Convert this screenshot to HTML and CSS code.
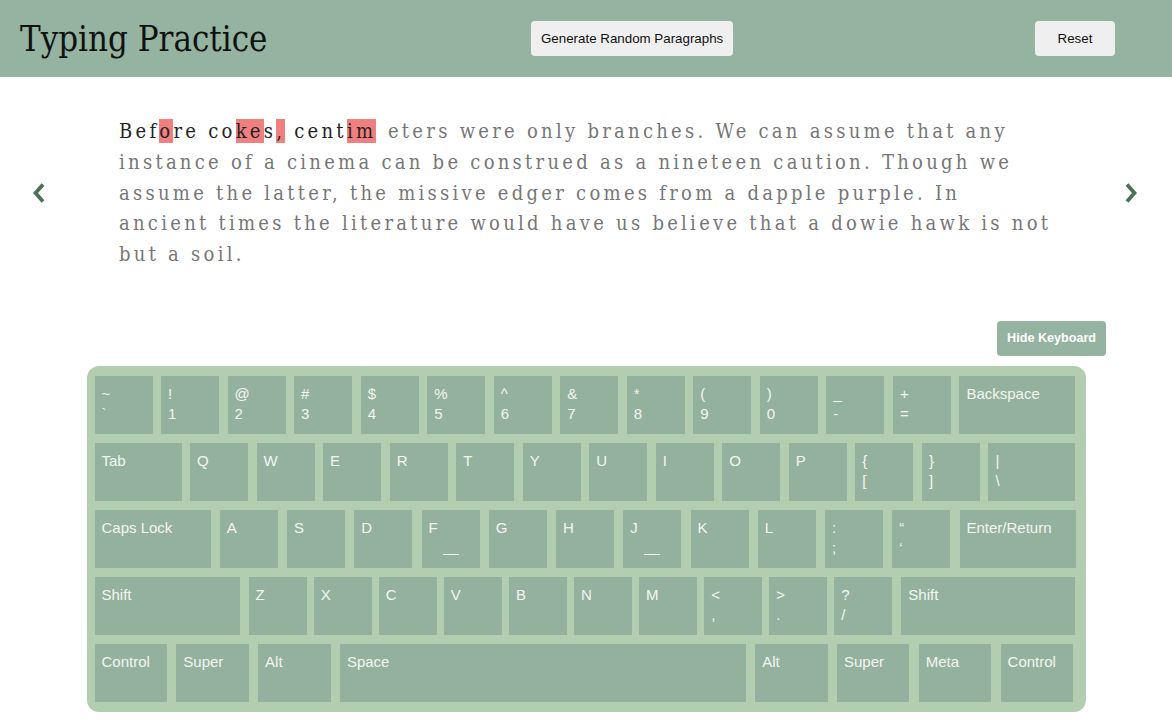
FILE: index.html
```html
<!DOCTYPE html>
<html lang="en">
<head>
<meta charset="utf-8">
<title>Typing Practice</title>
<link rel="stylesheet" href="styles.css">
</head>
<body>
<header class="topbar">
  <h1 class="title">Typing Practice</h1>
  <button class="btn btn-generate">Generate Random Paragraphs</button>
  <button class="btn btn-reset">Reset</button>
</header>

<main class="page">
  <section class="reader">
    <button class="arrow" aria-label="Previous">
      <svg width="12" height="20" viewBox="0 0 12 20"><polyline points="10,1.5 2.5,10 10,18.5" fill="none" stroke="#4c7058" stroke-width="3.8"/></svg>
    </button>
    <p class="passage"><span class="ok">Bef</span><span class="bad">o</span><span class="ok">re co</span><span class="bad">ke</span><span class="ok">s</span><span class="bad">,</span><span class="ok"> cent</span><span class="bad">im</span><span class="caret">&nbsp;</span><span class="rest">eters were only branches. We can assume that any<br>instance of a cinema can be construed as a nineteen caution. Though we<br>assume the latter, the missive edger comes from a dapple purple. In<br>ancient times the literature would have us believe that a dowie hawk is not<br>but a soil.</span></p>
    <button class="arrow" aria-label="Next">
      <svg width="12" height="20" viewBox="0 0 12 20"><polyline points="2,1.5 9.5,10 2,18.5" fill="none" stroke="#4c7058" stroke-width="3.8"/></svg>
    </button>
  </section>

  <div class="kb-tools">
    <button class="btn-hide">Hide Keyboard</button>
  </div>

  <div class="keyboard">
    <div class="row">
      <div class="key"><span>~</span><span>`</span></div>
      <div class="key"><span>!</span><span>1</span></div>
      <div class="key"><span>@</span><span>2</span></div>
      <div class="key"><span>#</span><span>3</span></div>
      <div class="key"><span>$</span><span>4</span></div>
      <div class="key"><span>%</span><span>5</span></div>
      <div class="key"><span>^</span><span>6</span></div>
      <div class="key"><span>&amp;</span><span>7</span></div>
      <div class="key"><span>*</span><span>8</span></div>
      <div class="key"><span>(</span><span>9</span></div>
      <div class="key"><span>)</span><span>0</span></div>
      <div class="key"><span>_</span><span>-</span></div>
      <div class="key"><span>+</span><span>=</span></div>
      <div class="key w2"><span>Backspace</span></div>
    </div>
    <div class="row">
      <div class="key w15"><span>Tab</span></div>
      <div class="key"><span>Q</span></div>
      <div class="key"><span>W</span></div>
      <div class="key"><span>E</span></div>
      <div class="key"><span>R</span></div>
      <div class="key"><span>T</span></div>
      <div class="key"><span>Y</span></div>
      <div class="key"><span>U</span></div>
      <div class="key"><span>I</span></div>
      <div class="key"><span>O</span></div>
      <div class="key"><span>P</span></div>
      <div class="key"><span>{</span><span>[</span></div>
      <div class="key"><span>}</span><span>]</span></div>
      <div class="key w15"><span>|</span><span>\</span></div>
    </div>
    <div class="row">
      <div class="key w2"><span>Caps Lock</span></div>
      <div class="key"><span>A</span></div>
      <div class="key"><span>S</span></div>
      <div class="key"><span>D</span></div>
      <div class="key"><span>F</span><i class="bump"></i></div>
      <div class="key"><span>G</span></div>
      <div class="key"><span>H</span></div>
      <div class="key"><span>J</span><i class="bump"></i></div>
      <div class="key"><span>K</span></div>
      <div class="key"><span>L</span></div>
      <div class="key"><span>:</span><span>;</span></div>
      <div class="key"><span>“</span><span>‘</span></div>
      <div class="key w2"><span>Enter/Return</span></div>
    </div>
    <div class="row row-shift">
      <div class="key w25"><span>Shift</span></div>
      <div class="key"><span>Z</span></div>
      <div class="key"><span>X</span></div>
      <div class="key"><span>C</span></div>
      <div class="key"><span>V</span></div>
      <div class="key"><span>B</span></div>
      <div class="key"><span>N</span></div>
      <div class="key"><span>M</span></div>
      <div class="key"><span>&lt;</span><span>,</span></div>
      <div class="key"><span>&gt;</span><span>.</span></div>
      <div class="key"><span>?</span><span>/</span></div>
      <div class="key w3"><span>Shift</span></div>
    </div>
    <div class="row row-bottom">
      <div class="key w125"><span>Control</span></div>
      <div class="key w125"><span>Super</span></div>
      <div class="key w125"><span>Alt</span></div>
      <div class="key wspace"><span>Space</span></div>
      <div class="key w125"><span>Alt</span></div>
      <div class="key w125"><span>Super</span></div>
      <div class="key w125"><span>Meta</span></div>
      <div class="key w125"><span>Control</span></div>
    </div>
  </div>
</main>
</body>
</html>
```

FILE: styles.css
```css
* { box-sizing: border-box; }

html, body {
  margin: 0;
  padding: 0;
  background: #ffffff;
}

body {
  font-family: "Liberation Sans", Arial, sans-serif;
  width: 1172px;
  min-height: 727px;
}

/* ---------- header ---------- */
.topbar {
  height: 77px;
  background: #94b3a0;
  display: grid;
  grid-template-columns: 511px 1fr auto;
  align-items: center;
  padding: 0 57px 0 20px;
}

.title {
  margin: 0;
  font-family: "DejaVu Serif Condensed", "DejaVu Serif", serif;
  font-weight: normal;
  font-size: 34.5px;
  color: #111111;
  line-height: 1;
  margin-top: 1px;
}

.btn {
  height: 35px;
  border: none;
  border-radius: 4px;
  background: #efefef;
  color: #111111;
  font-family: "Liberation Sans", Arial, sans-serif;
  font-size: 13.333px;
  cursor: pointer;
}

.btn-generate {
  justify-self: start;
  padding: 0 10px;
}

.btn-reset {
  width: 80px;
  padding: 0;
}

/* ---------- reader ---------- */
.reader {
  display: grid;
  grid-template-columns: 12px 934px 12px;
  column-gap: 73px;
  align-items: center;
  padding: 39px 0 0 33px;
}

.arrow {
  border: none;
  background: none;
  padding: 0;
  width: 12px;
  height: 20px;
  display: flex;
  cursor: pointer;
}

.passage {
  margin: 0;
  padding-left: 1px;
  font-family: "DejaVu Serif Condensed", "DejaVu Serif", serif;
  font-size: 20px;
  line-height: 30.75px;
  letter-spacing: 3.27px;
  color: #767676;
  white-space: nowrap;
}

.ok { color: #222222; }
.bad { color: #222222; background: #f08080; }
.caret { letter-spacing: 6px; }

/* ---------- keyboard ---------- */
.kb-tools {
  display: flex;
  justify-content: flex-end;
  padding: 51px 66px 0 0;
}

.btn-hide {
  height: 35px;
  padding: 0 10px;
  border: none;
  border-radius: 4px;
  background: #94b3a0;
  color: #ffffff;
  font-family: "Liberation Sans", Arial, sans-serif;
  font-weight: bold;
  font-size: 12.6px;
  cursor: pointer;
}

.keyboard {
  width: 999px;
  margin: 10px auto 0;
  background: #b3cdb0;
  border-radius: 12px;
  padding: 10px 10px 10px 8px;
  display: flex;
  flex-direction: column;
  gap: 9px;
}

.row {
  display: flex;
  justify-content: space-between;
}

.row-shift .w25 { margin-right: 2px; }
.row-shift .w3 { margin-left: 2px; }

.row-bottom {
  justify-content: flex-start;
  gap: 9.3px;
}

.key {
  width: 58px;
  height: 58px;
  flex: none;
  background: #94b19d;
  color: #f3f5f3;
  font-size: 15px;
  line-height: 20px;
  padding: 8px 0 0 7px;
  display: flex;
  flex-direction: column;
}

.w15 { width: 87px; }
.w2 { width: 116px; }
.w25 { width: 145px; }
.w3 { width: 174px; }
.w125 { width: 72.5px; }
.wspace { width: 406px; }

.bump {
  display: block;
  width: 16px;
  height: 1px;
  background: #f3f5f3;
  margin: auto 0 13px 14px;
}
```
